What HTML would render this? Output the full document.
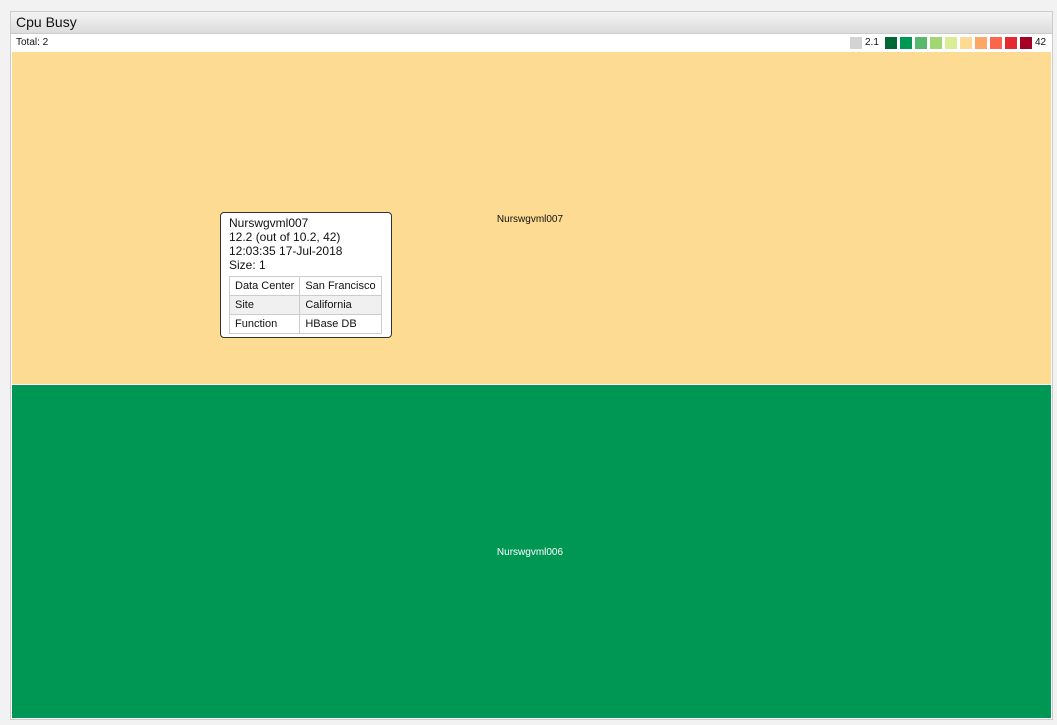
<!DOCTYPE html>
<html><head><style>
body{margin:0;width:1057px;height:725px;background:#f2f2f2;font-family:"Liberation Sans",sans-serif;position:relative;overflow:hidden}
.panel{position:absolute;left:10px;top:11px;width:1041px;height:707px;border:1px solid #ccc;background:#fff}
.hdr{height:21px;background:linear-gradient(#f4f4f4,#dcdcdc);border-bottom:1px solid #ccc;font-size:14px;padding-left:5px;line-height:21px;color:#111}
.tot{position:absolute;left:5px;top:25px;font-size:10px;color:#111}
.sq{position:absolute;top:25px;width:12px;height:12px}
.lt{position:absolute;top:25px;font-size:10px;color:#111;line-height:12px}
.y{position:absolute;left:1px;top:40px;width:1039px;height:332px;background:#fedb92}
.g{position:absolute;left:1px;top:373px;width:1039px;height:333px;background:#009754}
.lbl{position:absolute;font-size:10px;left:0;width:1036px;text-align:center}
.tip{position:absolute;left:220px;top:212px;width:172px;height:126px;background:#fff;border:1px solid #333;border-radius:4px;font-size:12px;line-height:14px;color:#111;box-sizing:border-box;padding:3px 8px}
table{border-collapse:collapse;font-size:11px;margin-top:4px;white-space:nowrap}
td{border:1px solid #ccc;padding:0 5px;height:18px;line-height:12px}
</style></head><body>
<div class="panel">
<div class="hdr">Cpu Busy</div>
<div class="tot">Total: 2</div>
<div class="sq" style="left:839px;background:#d3d3d3"></div><div class="lt" style="left:854px">2.1</div>
<div class="sq" style="left:874px;background:#006837"></div>
<div class="sq" style="left:889px;background:#009754"></div>
<div class="sq" style="left:904px;background:#58b86b"></div>
<div class="sq" style="left:919px;background:#a3d775"></div>
<div class="sq" style="left:934px;background:#d9ee94"></div>
<div class="sq" style="left:949px;background:#fedb92"></div>
<div class="sq" style="left:964px;background:#fda766"></div>
<div class="sq" style="left:979px;background:#fb654c"></div>
<div class="sq" style="left:994px;background:#e42930"></div>
<div class="sq" style="left:1009px;background:#a50026"></div>
<div class="lt" style="left:1024px">42</div>
<div class="y"><div class="lbl" style="top:162px;color:#111">Nurswgvml007</div></div>
<div class="g"><div class="lbl" style="top:162px;color:#fff">Nurswgvml006</div></div>
</div>
<div class="tip">Nurswgvml007<br>12.2 (out of 10.2, 42)<br>12:03:35 17-Jul-2018<br>Size: 1
<table><tr><td>Data Center</td><td>San Francisco</td></tr><tr style="background:#f0f0f0"><td>Site</td><td>California</td></tr><tr><td>Function</td><td>HBase DB</td></tr></table></div>
</body></html>
